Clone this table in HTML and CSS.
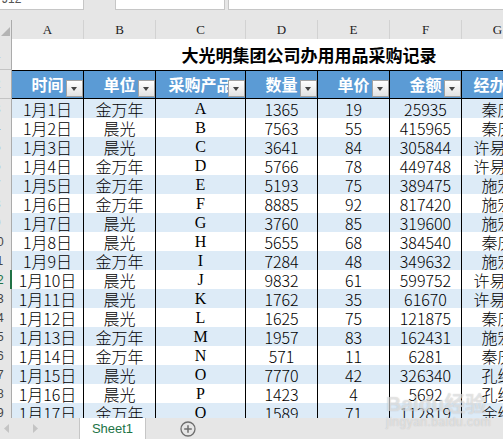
FILE: index.html
```html
<!DOCTYPE html>
<html lang="zh-CN">
<head>
<meta charset="utf-8">
<title>大光明集团公司办用用品采购记录</title>
<link rel="stylesheet" href="styles.css">
</head>
<body>
<div class="app">
  <div class="fbar">
    <div class="box box-name"><span class="namebox">J12</span></div>
    <div class="box box-mid"></div>
    <div class="box box-formula"></div>
  </div>
  <div class="sheet">
    <div class="row ch">
      <div class="corner"><svg width="11" height="18" viewBox="0 0 11 18"><polygon points="10,7 10,16 1,16" fill="#b4b4b4"/></svg></div>
      <div class="colh">A</div><div class="colh">B</div><div class="colh">C</div><div class="colh">D</div><div class="colh">E</div><div class="colh">F</div><div class="colh">G</div><div class="colh">H</div>
    </div>
    <div class="row tr">
      <div class="rh"><span>1</span></div>
      <div class="title">大光明集团公司办用用品采购记录</div>
    </div>
    <div class="row hd">
      <div class="rh"><span>2</span></div>
      <div class="hc">时间<i class="dd"></i></div>
      <div class="hc">单位<i class="dd"></i></div>
      <div class="hc">采购产品<i class="dd"></i></div>
      <div class="hc">数量<i class="dd"></i></div>
      <div class="hc">单价<i class="dd"></i></div>
      <div class="hc">金额<i class="dd"></i></div>
      <div class="hc">经办人<i class="dd"></i></div>
      <div class="hc"></div>
    </div>
    <div class="row dr odd"><div class="rh"><span>3</span></div><div class="c">1月1日</div><div class="c">金万年</div><div class="c l">A</div><div class="c">1365</div><div class="c">19</div><div class="c">25935</div><div class="c">秦庆</div><div class="c"></div></div>
    <div class="row dr"><div class="rh"><span>4</span></div><div class="c">1月2日</div><div class="c">晨光</div><div class="c l">B</div><div class="c">7563</div><div class="c">55</div><div class="c">415965</div><div class="c">秦庆</div><div class="c"></div></div>
    <div class="row dr odd"><div class="rh"><span>5</span></div><div class="c">1月3日</div><div class="c">晨光</div><div class="c l">C</div><div class="c">3641</div><div class="c">84</div><div class="c">305844</div><div class="c">许易阳</div><div class="c"></div></div>
    <div class="row dr"><div class="rh"><span>6</span></div><div class="c">1月4日</div><div class="c">金万年</div><div class="c l">D</div><div class="c">5766</div><div class="c">78</div><div class="c">449748</div><div class="c">许易阳</div><div class="c"></div></div>
    <div class="row dr odd"><div class="rh"><span>7</span></div><div class="c">1月5日</div><div class="c">金万年</div><div class="c l">E</div><div class="c">5193</div><div class="c">75</div><div class="c">389475</div><div class="c">施宏</div><div class="c"></div></div>
    <div class="row dr"><div class="rh"><span>8</span></div><div class="c">1月6日</div><div class="c">金万年</div><div class="c l">F</div><div class="c">8885</div><div class="c">92</div><div class="c">817420</div><div class="c">施宏</div><div class="c"></div></div>
    <div class="row dr odd"><div class="rh"><span>9</span></div><div class="c">1月7日</div><div class="c">晨光</div><div class="c l">G</div><div class="c">3760</div><div class="c">85</div><div class="c">319600</div><div class="c">施宏</div><div class="c"></div></div>
    <div class="row dr"><div class="rh"><span>10</span></div><div class="c">1月8日</div><div class="c">晨光</div><div class="c l">H</div><div class="c">5655</div><div class="c">68</div><div class="c">384540</div><div class="c">秦庆</div><div class="c"></div></div>
    <div class="row dr odd"><div class="rh"><span>11</span></div><div class="c">1月9日</div><div class="c">金万年</div><div class="c l">I</div><div class="c">7284</div><div class="c">48</div><div class="c">349632</div><div class="c">施宏</div><div class="c"></div></div>
    <div class="row dr"><div class="rh sel"><span>12</span></div><div class="c">1月10日</div><div class="c">晨光</div><div class="c l">J</div><div class="c">9832</div><div class="c">61</div><div class="c">599752</div><div class="c">许易阳</div><div class="c"></div></div>
    <div class="row dr odd"><div class="rh"><span>13</span></div><div class="c">1月11日</div><div class="c">晨光</div><div class="c l">K</div><div class="c">1762</div><div class="c">35</div><div class="c">61670</div><div class="c">许易阳</div><div class="c"></div></div>
    <div class="row dr"><div class="rh"><span>14</span></div><div class="c">1月12日</div><div class="c">晨光</div><div class="c l">L</div><div class="c">1625</div><div class="c">75</div><div class="c">121875</div><div class="c">秦庆</div><div class="c"></div></div>
    <div class="row dr odd"><div class="rh"><span>15</span></div><div class="c">1月13日</div><div class="c">金万年</div><div class="c l">M</div><div class="c">1957</div><div class="c">83</div><div class="c">162431</div><div class="c">施宏</div><div class="c"></div></div>
    <div class="row dr"><div class="rh"><span>16</span></div><div class="c">1月14日</div><div class="c">金万年</div><div class="c l">N</div><div class="c">571</div><div class="c">11</div><div class="c">6281</div><div class="c">秦庆</div><div class="c"></div></div>
    <div class="row dr odd"><div class="rh"><span>17</span></div><div class="c">1月15日</div><div class="c">晨光</div><div class="c l">O</div><div class="c">7770</div><div class="c">42</div><div class="c">326340</div><div class="c">孔维</div><div class="c"></div></div>
    <div class="row dr"><div class="rh"><span>18</span></div><div class="c">1月16日</div><div class="c">晨光</div><div class="c l">P</div><div class="c">1423</div><div class="c">4</div><div class="c">5692</div><div class="c">孔维</div><div class="c"></div></div>
    <div class="row dr odd"><div class="rh"><span>19</span></div><div class="c">1月17日</div><div class="c">金万年</div><div class="c l">Q</div><div class="c">1589</div><div class="c">71</div><div class="c">112819</div><div class="c">余维</div><div class="c"></div></div>
  </div>
  <div class="tabs">
    <div class="nav">
      <svg width="6" height="9" viewBox="0 0 6 9"><polygon points="5,0 5,9 0,4.5" fill="#c4c4c4"/></svg>
      <svg width="6" height="9" viewBox="0 0 6 9"><polygon points="0,0 0,9 5,4.5" fill="#c4c4c4"/></svg>
    </div>
    <div class="tab">Sheet1</div>
    <svg class="plus" width="16" height="16" viewBox="0 0 16 16"><circle cx="8" cy="8" r="7" fill="none" stroke="#6f6f6f" stroke-width="1.3"/><path d="M8 4.2V11.8M4.2 8H11.8" stroke="#6f6f6f" stroke-width="1.5"/></svg>
  </div>
  <div class="wm"><span class="wm1">Baidu经验</span><span class="wm2">jingyan.baidu.com</span></div>
</div>
</body>
</html>
```
FILE: styles.css
```css
html, body {
  margin: 0;
  padding: 0;
}
body {
  width: 503px;
  height: 439px;
  overflow: hidden;
  background: #e6e6e6;
  font-family: "Noto Sans CJK SC", "Liberation Sans", sans-serif;
}
.app {
  width: 503px;
  height: 439px;
  display: flex;
  flex-direction: column;
  position: relative;
  overflow: hidden;
}
.fbar {
  height: 20px;
  flex: none;
  display: flex;
  align-items: flex-start;
  background: #e6e6e6;
}
.box {
  height: 10px;
  box-sizing: border-box;
  background: #fff;
  border-bottom: 1px solid #c6c6c6;
  border-right: 1px solid #c6c6c6;
  overflow: hidden;
}
.box-name {
  width: 84px;
  position: relative;
}
.namebox {
  display: block;
  margin-top: -8px;
  padding-left: 2px;
  font: 12px/14px "Liberation Sans", sans-serif;
  color: #555;
}
.box-mid {
  width: 110px;
  margin-left: 31px;
  border-left: 1px solid #c6c6c6;
}
.box-formula {
  flex: 1;
  margin-left: 3px;
  border-left: 1px solid #c6c6c6;
  border-right: none;
}
.sheet {
  height: 398px;
  flex: none;
  overflow: hidden;
  background: #fff;
}
.row {
  display: grid;
  grid-template-columns: 12px 72px 72px 90px 72px 72px 72px 72px 72px;
  width: max-content;
}
.row > div {
  box-sizing: border-box;
}
.ch {
  height: 19px;
  background: #e6e6e6;
}
.corner {
  border-right: 1px solid #ababab;
  border-bottom: 1px solid #ababab;
  overflow: hidden;
}
.corner svg {
  display: block;
}
.colh {
  border-right: 1px solid #d2d2d2;
  border-bottom: 1px solid #ababab;
  font: 13px/18px "Liberation Serif", serif;
  color: #222;
  text-align: center;
  padding-top: 1px;
}
.rh {
  background: #e6e6e6;
  border-right: 1px solid #ababab;
  border-bottom: 1px solid #c4c4c4;
  overflow: hidden;
  display: flex;
  align-items: center;
  font: 12px/14px "Liberation Sans", sans-serif;
  color: #444;
}
.rh span {
  flex: none;
  width: 30px;
  margin-left: -18px;
  text-align: center;
}
.rh.sel {
  color: #217346;
  border-right: 2px solid #217346;
}
.tr {
  height: 31px;
}
.title {
  grid-column: 2 / -1;
  background: #fff;
  font-weight: 700;
  font-size: 17px;
  line-height: 31px;
  text-align: center;
  color: #000;
}
.hd {
  height: 29px;
}
.hc {
  position: relative;
  background: #5b9bd5;
  color: #fff;
  font-weight: 700;
  font-size: 16px;
  line-height: 27px;
  text-align: center;
  border-top: 1px solid #000;
  border-bottom: 1px solid #000;
  border-right: 1px solid #000;
}
.dd {
  position: absolute;
  right: 0;
  bottom: 1px;
  width: 17px;
  height: 17px;
  box-sizing: border-box;
  border: 1px solid #a3a3a3;
  background: linear-gradient(#ffffff, #e2e2e2);
}
.dd::after {
  content: "";
  position: absolute;
  left: 4px;
  top: 6px;
  border-left: 3.5px solid transparent;
  border-right: 3.5px solid transparent;
  border-top: 4px solid #444;
}
.dr {
  height: 19px;
}
.c {
  background: #fff;
  border-right: 1px solid #000;
  border-bottom: 1px solid #000;
  font-size: 16px;
  font-weight: 300;
  line-height: 18px;
  text-align: center;
  color: #000;
  white-space: nowrap;
  padding-top: 1px;
}
.odd .c {
  background: #ddebf7;
}
.c.l {
  font-family: "Liberation Serif", serif;
  font-weight: 400;
  font-size: 16px;
}
.tabs {
  height: 21px;
  flex: none;
  display: flex;
  align-items: stretch;
  background: #e6e6e6;
}
.nav {
  width: 79px;
  display: flex;
  align-items: center;
  gap: 23px;
  padding-left: 4px;
  box-sizing: border-box;
}
.nav svg {
  display: block;
}
.tab {
  width: 67px;
  box-sizing: border-box;
  background: #fff;
  border-left: 1px solid #c6c6c6;
  border-right: 1px solid #c6c6c6;
  color: #217346;
  font: 13px/21px "Liberation Sans", sans-serif;
  text-align: center;
}
.plus {
  align-self: center;
  margin-left: 34px;
}
.wm {
  position: absolute;
  left: 386px;
  top: 393px;
  display: flex;
  flex-direction: column;
  color: rgba(255, 255, 255, 0.5);
  text-shadow: 0 0 1px rgba(120, 120, 120, 0.45);
  pointer-events: none;
}
.wm1 {
  font: 700 21px/22px "Liberation Sans", "Noto Sans CJK SC", sans-serif;
}
.wm2 {
  font: 12px/14px "Liberation Sans", sans-serif;
  letter-spacing: 0.5px;
}
```
